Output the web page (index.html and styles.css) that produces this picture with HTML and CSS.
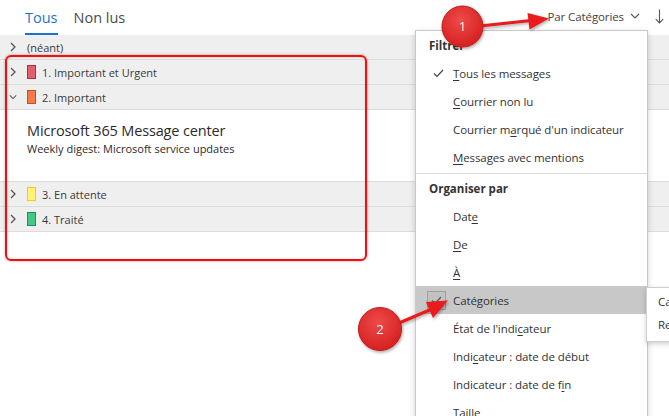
FILE: index.html
```html
<!DOCTYPE html>
<html lang="fr">
<head>
<meta charset="utf-8">
<title>Outlook - Par Catégories</title>
<link rel="stylesheet" href="styles.css">
</head>
<body>
<div class="app">
  <header class="topbar">
    <nav class="tabs">
      <span class="tab active">Tous</span>
      <span class="tab">Non lus</span>
    </nav>
    <div class="sort">
      <span class="sort-label">Par Catégories</span>
      <svg class="sort-chev" width="10" height="6" viewBox="0 0 10 6"><path d="M1 1 L5 5 L9 1" fill="none" stroke="#555" stroke-width="1.1"/></svg>
      <svg class="sort-dir" width="9" height="15" viewBox="0 0 9 15"><path d="M4.5 0.5 V14 M0.8 10.2 L4.5 14 L8.2 10.2" fill="none" stroke="#555" stroke-width="1.1"/></svg>
    </div>
  </header>

  <div class="list">
    <div class="group">
      <svg class="chev" width="8" height="10" viewBox="0 0 8 10"><path d="M2 1 L6 5 L2 9" fill="none" stroke="#555" stroke-width="1.3"/></svg>
      <span class="label">(néant)</span>
    </div>
    <div class="group">
      <svg class="chev" width="8" height="10" viewBox="0 0 8 10"><path d="M2 1 L6 5 L2 9" fill="none" stroke="#555" stroke-width="1.3"/></svg>
      <span class="cat cat-red"></span>
      <span class="label">1. Important et Urgent</span>
    </div>
    <div class="group">
      <svg class="chev" width="8" height="10" viewBox="0 0 10 8"><path d="M1 2 L5 6 L9 2" fill="none" stroke="#555" stroke-width="1.3"/></svg>
      <span class="cat cat-orange"></span>
      <span class="label">2. Important</span>
    </div>
    <div class="message">
      <div class="from">Microsoft 365 Message center</div>
      <div class="subject">Weekly digest: Microsoft service updates</div>
    </div>
    <div class="group">
      <svg class="chev" width="8" height="10" viewBox="0 0 8 10"><path d="M2 1 L6 5 L2 9" fill="none" stroke="#555" stroke-width="1.3"/></svg>
      <span class="cat cat-yellow"></span>
      <span class="label">3. En attente</span>
    </div>
    <div class="group">
      <svg class="chev" width="8" height="10" viewBox="0 0 8 10"><path d="M2 1 L6 5 L2 9" fill="none" stroke="#555" stroke-width="1.3"/></svg>
      <span class="cat cat-green"></span>
      <span class="label">4. Traité</span>
    </div>
  </div>

  <div class="menu">
    <div class="menu-heading">Filtrer</div>
    <div class="menu-item checked">
      <svg class="check" width="11" height="9" viewBox="0 0 11 9"><path d="M1 4.5 L4 7.5 L10 1" fill="none" stroke="#444" stroke-width="1.2"/></svg>
      <span><u>T</u>ous les messages</span>
    </div>
    <div class="menu-item"><span><u>C</u>ourrier non lu</span></div>
    <div class="menu-item"><span>Courrier m<u>a</u>rqué d'un indicateur</span></div>
    <div class="menu-item"><span><u>M</u>essages avec mentions</span></div>
    <div class="menu-sep"></div>
    <div class="menu-heading">Organiser par</div>
    <div class="menu-item"><span>Dat<u>e</u></span></div>
    <div class="menu-item"><span><u>D</u>e</span></div>
    <div class="menu-item"><span><u>À</u></span></div>
    <div class="menu-item selected">
      <span class="box"><svg width="11" height="9" viewBox="0 0 11 9"><path d="M1 4.5 L4 7.5 L10 1" fill="none" stroke="#555" stroke-width="1.2"/></svg></span>
      <span>Caté<u>g</u>ories</span>
    </div>
    <div class="menu-item"><span>État de l'indi<u>c</u>ateur</span></div>
    <div class="menu-item"><span>Indi<u>c</u>ateur : date de début</span></div>
    <div class="menu-item"><span>Indicateur : date de f<u>i</u>n</span></div>
    <div class="menu-item"><span>Taille</span></div>
  </div>

  <div class="submenu">
    <div class="sub-item">Catégorie</div>
    <div class="sub-item">Regrouper</div>
  </div>

  <div class="highlight-box"></div>

  <svg class="annotations" width="669" height="416" viewBox="0 0 669 416">
    <defs>
      <radialGradient id="bubble" cx="45%" cy="35%" r="65%">
        <stop offset="0" stop-color="#ee4a4a"/>
        <stop offset="1" stop-color="#d62020"/>
      </radialGradient>
      <filter id="shadow" x="-30%" y="-30%" width="160%" height="160%">
        <feDropShadow dx="1" dy="1.5" stdDeviation="1.5" flood-color="#000" flood-opacity="0.35"/>
      </filter>
    </defs>
    <g filter="url(#shadow)">
      <line x1="480" y1="26" x2="531" y2="20.5" stroke="#e81b1b" stroke-width="3"/>
      <polygon points="549,18.5 529.5,29.5 527.5,13" fill="#e81b1b"/>
      <circle cx="462.5" cy="26.5" r="20.5" fill="url(#bubble)" stroke="#c41a1a" stroke-width="1"/>
      <text x="462.5" y="31" text-anchor="middle" class="num">1</text>
    </g>
    <g filter="url(#shadow)">
      <line x1="392" y1="326" x2="432" y2="309" stroke="#e81b1b" stroke-width="3"/>
      <polygon points="448,300.5 433,318 426,302" fill="#e81b1b"/>
      <circle cx="380" cy="329" r="21.5" fill="url(#bubble)" stroke="#c41a1a" stroke-width="1"/>
      <text x="380" y="333.5" text-anchor="middle" class="num">2</text>
    </g>
  </svg>
</div>
</body>
</html>
```

FILE: styles.css
```css
* { box-sizing: border-box; }

html, body {
  margin: 0;
  padding: 0;
  background: #ffffff;
}

body {
  font-family: "Open Sans", "Noto Sans", "Liberation Sans", sans-serif;
  color: #333333;
}

.app {
  position: relative;
  width: 669px;
  height: 416px;
  overflow: hidden;
  background: #ffffff;
}

/* ---------- top bar ---------- */
.topbar {
  height: 35px;
  display: flex;
  justify-content: space-between;
  align-items: stretch;
}

.tabs {
  display: flex;
  gap: 16px;
  padding-left: 25px;
}

.tab {
  font-size: 14.5px;
  color: #4a4a4a;
  display: flex;
  align-items: center;
  padding-top: 2px;
  border-bottom: 2px solid transparent;
}

.tab.active {
  color: #1e73c6;
  border-bottom-color: #1e73c6;
}

.sort {
  display: flex;
  align-items: center;
  padding-right: 5px;
  padding-bottom: 3px;
  color: #444;
}

.sort-label {
  font-size: 11.5px;
  letter-spacing: -0.1px;
  margin-right: 6px;
}

.sort-chev { margin-right: 15px; }

/* ---------- list ---------- */
.list {
  display: flex;
  flex-direction: column;
}

.group {
  height: 25px;
  background: #efefef;
  border-bottom: 1px solid #dcdcdc;
  display: flex;
  align-items: center;
  padding-left: 9px;
  font-size: 11px;
  color: #3a3a3a;
}

.chev {
  width: 8px;
  height: 10px;
  margin-right: 10px;
}

.cat {
  width: 9px;
  height: 14px;
  border: 1px solid;
  margin-right: 6px;
}

.cat-red { background: #e2606e; border-color: #c22a3c; }
.cat-orange { background: #f27b4a; border-color: #d54a10; }
.cat-yellow { background: #fff276; border-color: #f1cf10; }
.cat-green { background: #43c985; border-color: #0f9a4c; }

.message {
  height: 72px;
  background: #ffffff;
  border-bottom: 1px solid #dcdcdc;
  padding: 11px 0 0 27px;
}

.from {
  font-size: 14.5px;
  letter-spacing: -0.15px;
  line-height: 20px;
  color: #2a2a2a;
}

.subject {
  font-size: 11px;
  line-height: 15px;
  color: #2a2a2a;
}

/* ---------- dropdown menu ---------- */
.menu {
  position: absolute;
  left: 415px;
  top: 30px;
  width: 233px;
  height: 400px;
  background: #ffffff;
  border: 1px solid #c8c8c8;
  box-shadow: 0 2px 6px rgba(0, 0, 0, 0.18);
  display: flex;
  flex-direction: column;
}

.menu-heading {
  height: 28px;
  flex: none;
  display: flex;
  align-items: center;
  padding-left: 13px;
  font-size: 11.5px;
  font-weight: 700;
  color: #333;
}

.menu-item {
  position: relative;
  height: 28px;
  flex: none;
  display: flex;
  align-items: center;
  padding-left: 37px;
  font-size: 11.5px;
  letter-spacing: -0.1px;
  color: #333;
}

.menu-item u {
  text-underline-offset: 2px;
}

.menu-item .check {
  position: absolute;
  left: 17px;
  top: 10px;
}

.menu-item.selected {
  background: #c8c8c8;
}

.menu-item .box {
  position: absolute;
  left: 11px;
  top: 5px;
  width: 19px;
  height: 19px;
  border: 1px solid #a0a0a0;
  background: #c2c2c2;
  display: flex;
  align-items: center;
  justify-content: center;
}

.menu-sep {
  flex: none;
  height: 1px;
  background: #dadada;
  margin: 2px 0 0;
}

/* ---------- sub menu ---------- */
.submenu {
  position: absolute;
  left: 646px;
  top: 287px;
  width: 120px;
  height: 55px;
  background: #ffffff;
  border: 1px solid #cfcfcf;
  box-shadow: 0 2px 5px rgba(0, 0, 0, 0.18);
  padding: 2px 0 0 11px;
  font-size: 11.5px;
  color: #333;
}

.sub-item {
  height: 23px;
  display: flex;
  align-items: center;
}

/* ---------- annotations ---------- */
.highlight-box {
  position: absolute;
  left: 5px;
  top: 55px;
  width: 362px;
  height: 206px;
  border: 2px solid #ff0a0a;
  border-radius: 6px;
  box-shadow: 0 0 3px rgba(0, 0, 0, 0.3), inset 0 0 2px rgba(0, 0, 0, 0.15);
  pointer-events: none;
}

.annotations {
  position: absolute;
  left: 0;
  top: 0;
  pointer-events: none;
}

.num {
  font-family: "Open Sans", "Liberation Sans", sans-serif;
  font-size: 13px;
  fill: #ffffff;
}
```
